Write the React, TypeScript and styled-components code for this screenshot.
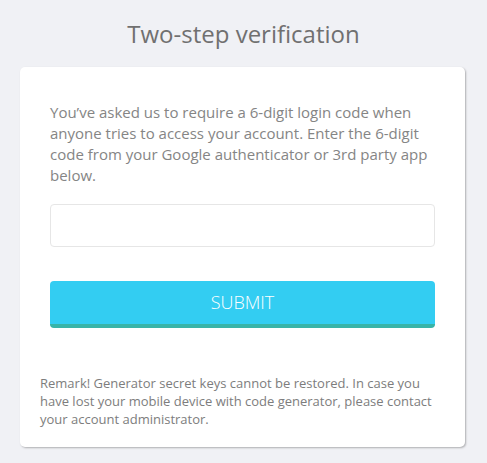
import React from 'react'
import styled, { createGlobalStyle } from 'styled-components'

const GlobalStyle = createGlobalStyle`
  html, body {
    margin: 0;
    padding: 0;
    background: #f0f1f5;
    font-family: 'Open Sans', 'Liberation Sans', sans-serif;
  }
`

const Page = styled.div`
  width: 487px;
  height: 463px;
  box-sizing: border-box;
  padding-top: 17px;
`

const Title = styled.h1`
  margin: 0 0 16px;
  height: 34px;
  line-height: 34px;
  text-align: center;
  font-size: 24px;
  font-weight: 400;
  color: #707070;
`

const Card = styled.div`
  margin: 0 22px 0 20px;
  background: #fff;
  border-radius: 5px;
  box-shadow: 1px 1px 2px rgba(0, 0, 0, 0.28);
  padding: 35px 0 19px;
`

const Intro = styled.p`
  margin: 0 30px 18px;
  font-size: 15px;
  line-height: 21px;
  color: #858585;
`

const CodeInput = styled.input`
  display: block;
  box-sizing: border-box;
  margin: 0 30px;
  width: calc(100% - 60px);
  height: 43px;
  border: 1px solid #e6e6e6;
  border-radius: 4px;
  outline: none;
  padding: 0 12px;
  font-family: inherit;
  font-size: 15px;
`

const SubmitButton = styled.button`
  display: block;
  box-sizing: border-box;
  margin: 34px 30px 46px;
  width: calc(100% - 60px);
  height: 47px;
  border: none;
  border-bottom: 4px solid #38b4a8;
  border-radius: 4px;
  background: #33cdf2;
  color: #fff;
  font-family: inherit;
  font-size: 18px;
  font-weight: 300;
  padding: 0 0 2px;
  cursor: pointer;
`

const Remark = styled.p`
  margin: 0 20px;
  font-size: 13px;
  line-height: 18px;
  color: #7d7d7d;
`

export default function App() {
  return (
    <Page>
      <GlobalStyle />
      <Title>Two-step verification</Title>
      <Card>
        <Intro>
          You’ve asked us to require a 6-digit login code when anyone tries to access your account.
          Enter the 6-digit code from your Google authenticator or 3rd party app below.
        </Intro>
        <CodeInput type="text" />
        <SubmitButton type="button">SUBMIT</SubmitButton>
        <Remark>
          Remark! Generator secret keys cannot be restored. In case you have lost your mobile device
          with code generator, please contact your account administrator.
        </Remark>
      </Card>
    </Page>
  )
}
